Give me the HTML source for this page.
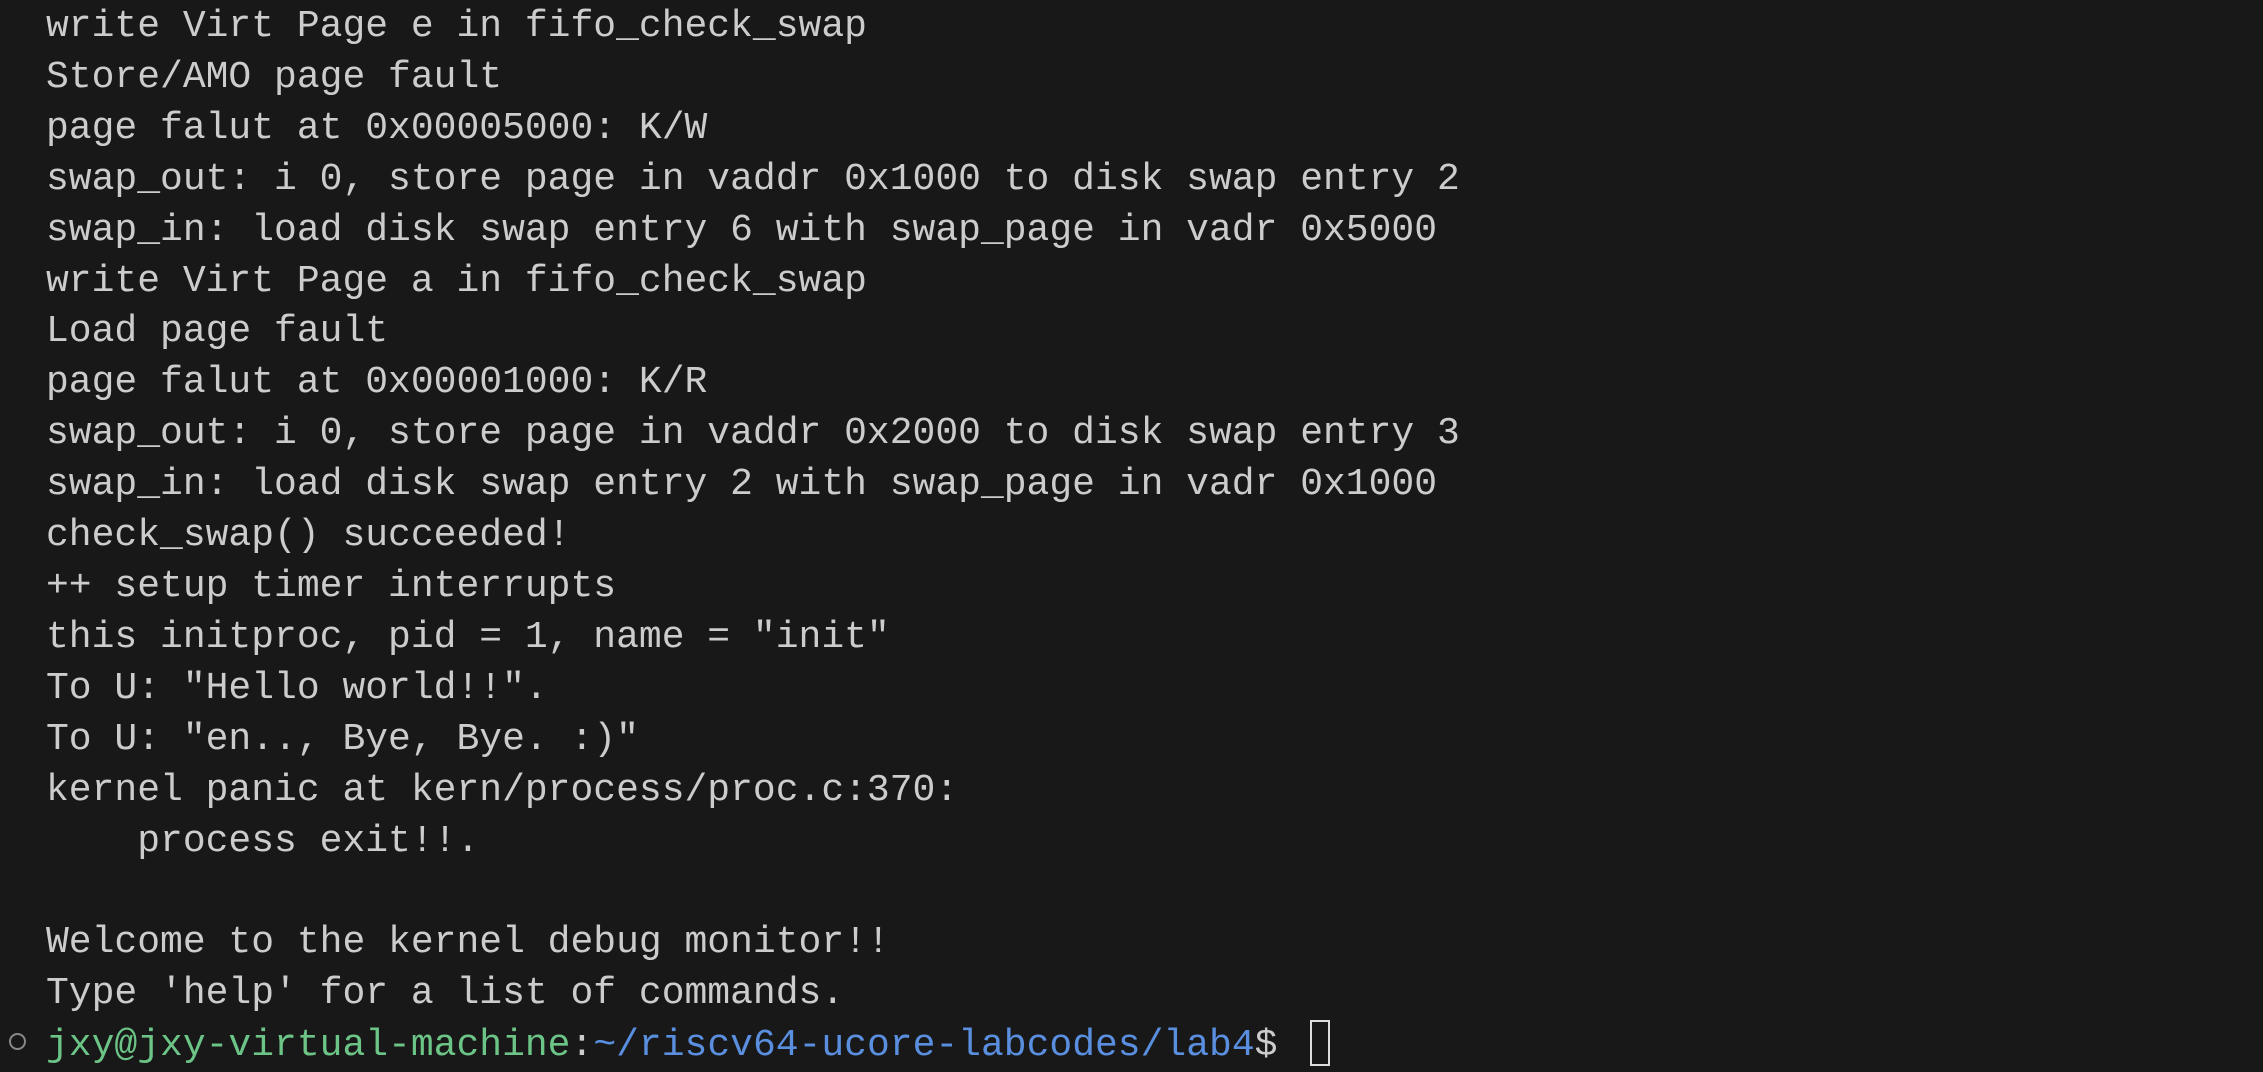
<!DOCTYPE html>
<html><head><meta charset="utf-8"><style>
html,body{margin:0;padding:0;background:#181818;width:2263px;height:1069px;overflow:hidden}
pre{margin:0;position:absolute;left:46px;top:2px;font-family:"Liberation Mono",monospace;font-size:38px;line-height:50.9px;color:#cccccc;white-space:pre}
.g{color:#6cc487}.b{color:#5a8fe0}
.cur{display:inline-block;width:20px;height:46px;border:2px solid #ddd;vertical-align:-11px;margin-left:33px;box-sizing:border-box}
.dot{position:absolute;left:9px;top:1033px;width:17px;height:17px;border:2px solid #888;border-radius:50%;box-sizing:border-box}
</style></head><body>
<pre>write Virt Page e in fifo_check_swap
Store/AMO page fault
page falut at 0x00005000: K/W
swap_out: i 0, store page in vaddr 0x1000 to disk swap entry 2
swap_in: load disk swap entry 6 with swap_page in vadr 0x5000
write Virt Page a in fifo_check_swap
Load page fault
page falut at 0x00001000: K/R
swap_out: i 0, store page in vaddr 0x2000 to disk swap entry 3
swap_in: load disk swap entry 2 with swap_page in vadr 0x1000
check_swap() succeeded!
++ setup timer interrupts
this initproc, pid = 1, name = "init"
To U: "Hello world!!".
To U: "en.., Bye, Bye. :)"
kernel panic at kern/process/proc.c:370:
    process exit!!.

Welcome to the kernel debug monitor!!
Type 'help' for a list of commands.
<span class="g">jxy@jxy-virtual-machine</span>:<span class="b">~/riscv64-ucore-labcodes/lab4</span>$<span class="cur"></span></pre>
<div class="dot"></div>
</body></html>
